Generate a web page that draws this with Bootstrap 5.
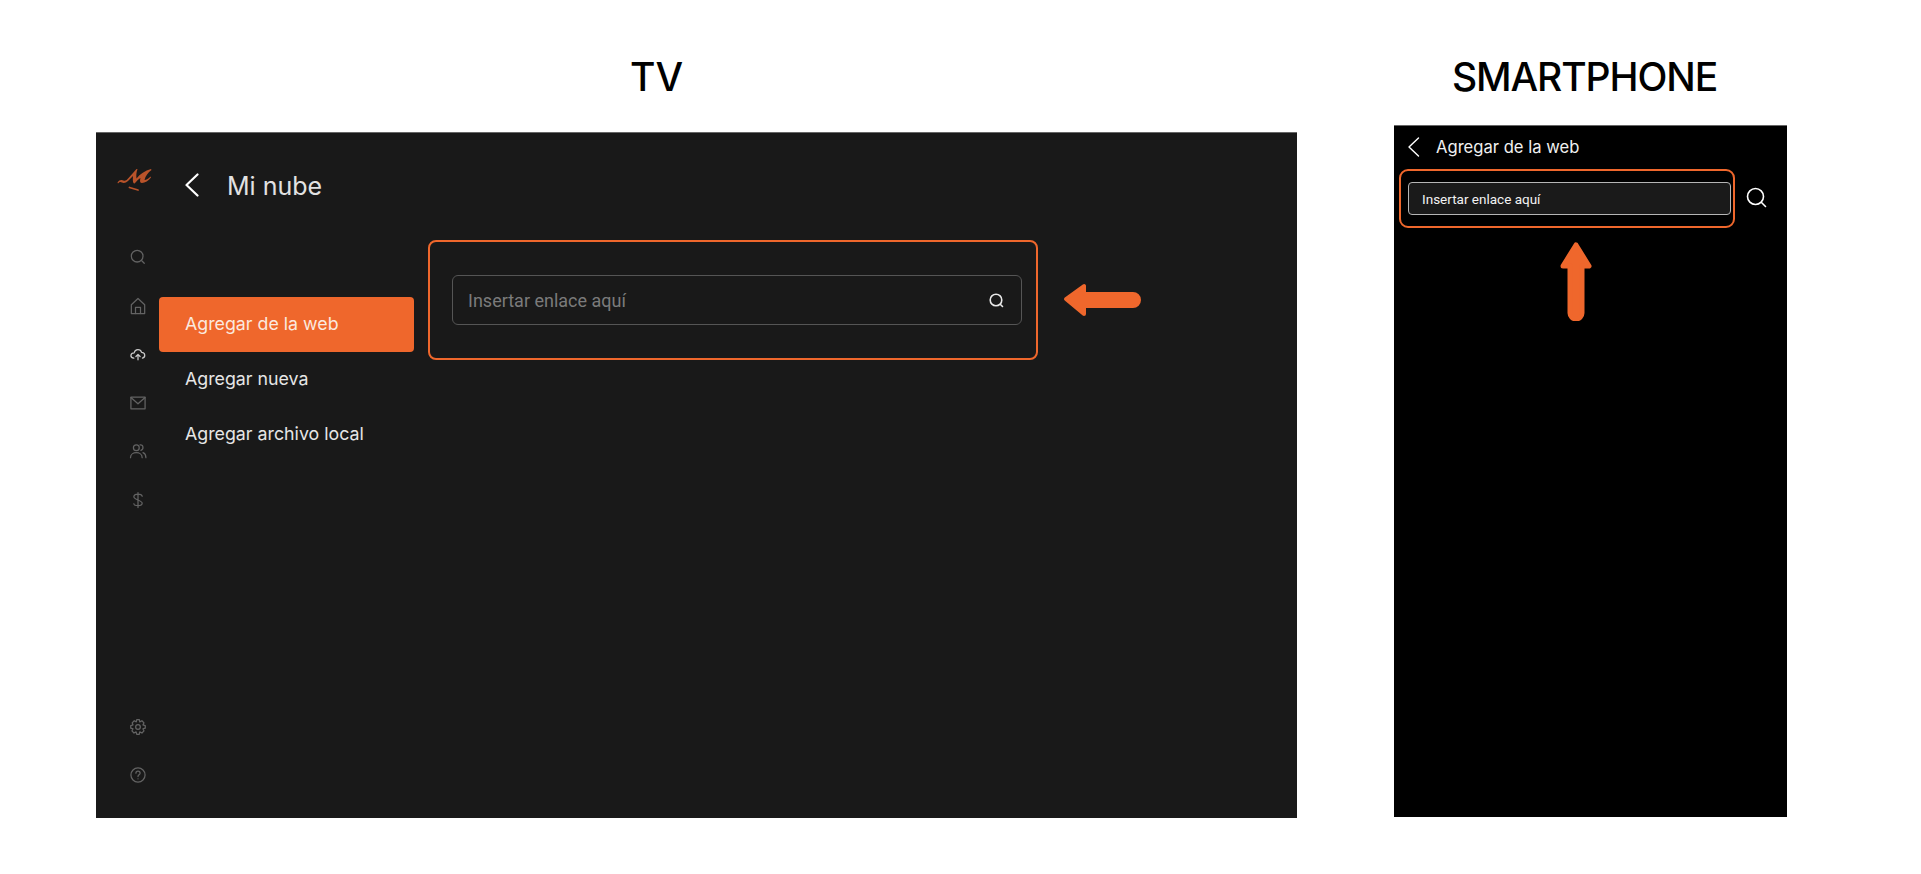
<!DOCTYPE html>
<html lang="es">
<head>
<meta charset="utf-8">
<title>Agregar de la web</title>
<link href="https://cdn.jsdelivr.net/npm/bootstrap@5.3.0/dist/css/bootstrap.min.css" rel="stylesheet">
<style>
html,body{height:874px;overflow:hidden;background:#fff}
body{font-family:Inter,"Liberation Sans",sans-serif;padding:51px 0 0 96px}
.cmp-col-tv{width:1201px;margin-right:97px}
.cmp-col-ph{width:393px}
.cmp-head{font-family:Inter,"Liberation Sans",sans-serif;font-weight:500;font-size:39px;line-height:52px;color:#000;text-align:center;margin:0}
.cmp-col-tv .cmp-head{padding-right:80px;margin-bottom:29px}
.cmp-col-ph .cmp-head{padding-right:12px;margin-bottom:22px;letter-spacing:-1.1px}
.tv-panel{height:686px;background:#191919;border-top:1px solid #666}
.tv-rail{width:63px;padding:35px 0 33px 21px}
.tv-logo{display:block;width:35px;height:24px;margin-bottom:55px}
.tv-rail-list{padding-left:11px;gap:28.5px}
.tv-rail-list svg{display:block;width:20px;height:20px;fill:none;stroke:#636363;stroke-width:1.5;stroke-linecap:round;stroke-linejoin:round}
.tv-rail-list svg.lit{stroke:#c9c9c9}
.tv-head{height:34px;margin:35px 0 38px 26px;gap:28px;color:#e2e2e2;font-size:25px}
.tv-head span{padding-top:4px}
.tv-back{width:14px;height:24px;fill:none;stroke:#fff;stroke-width:2.2;stroke-linecap:round;stroke-linejoin:round}
.tv-menu{width:255px;margin:57px 14px 0 0}
.tv-menu .nav-link{height:55px;padding:0 0 0 26px;display:flex;align-items:center;font-size:17.8px;color:#e6e6e6;border-radius:4px}
.tv-menu .nav-link.active{background:#ef672c;color:#fbe9df}
.mark-box{border:2px solid #ef672c;border-radius:8px}
.tv-mark{width:610px;height:120px;padding:0 14px 0 22px}
.tv-field{height:50px;border:1px solid #555;border-radius:6px;padding:0 16px;background:#191919}
.tv-field span{font-family:Roboto,sans-serif;font-size:18px;color:#7b7b7b;padding-top:1px;margin-left:-1px}
.tv-field svg{width:17px;height:17px;fill:none;stroke:#e8e8e8;stroke-width:1.6;stroke-linecap:round}
.tv-arrow{width:78px;height:34px;margin-left:25px}
.ph-panel{height:692px;background:#000;border-top:1px solid #666;padding:11px 0 0 5px}
.ph-head{height:20px;margin-left:9px;gap:16px;color:#f0f0f0;font-size:16.6px}
.ph-back{width:12px;height:20px;fill:none;stroke:#fff;stroke-width:1.4;stroke-linecap:round;stroke-linejoin:round}
.ph-row{margin-top:12px}
.ph-mark{width:336px;height:59px;padding:0 2px 0 7px;border-radius:9px}
.ph-field{height:33px;border:1.5px solid #b5b5b5;border-radius:4px;background:#1a1a1a;padding:1px 0 0 13px;font-family:Roboto,sans-serif;font-size:13.5px;color:#f2f2f2}
.ph-search{width:21px;height:21px;margin:0 0 3px 11px;fill:none;stroke:#fff;stroke-width:1.6;stroke-linecap:round}
.ph-arrow{display:block;width:34px;height:80px;margin:13px 0 0 160px}
</style>
</head>
<body>
<div class="d-flex align-items-start">
  <section class="cmp-col-tv">
    <h2 class="cmp-head">TV</h2>
    <div class="tv-panel d-flex">
      <aside class="tv-rail d-flex flex-column">
        <svg class="tv-logo" viewBox="0 0 35 24">
          <path fill="#b9532a" d="M.5 14.500C2 11.500 5 11.500 6.500 12.500 8 13.500 10 12 12 9.500L19.500 1h1C19.500 4 19 7 19.500 10.500 23 6 28 2.500 34 1l.5 1C31 4.500 28.500 8 27.500 12c2 0 4-1.500 6-3.500l.5 1C31.500 12.500 28 15 25 15c-2 0-2.500-2-1.500-5-2 1-4.500 4-6 5.500-1.500 0-2-2.500-1.500-7.500l-5 5c-2 2-4.500 2.500-6 1.500-1.500-1-3-.5-4 1z"/>
          <path d="M12.500 19.500l8.500 2.500" stroke="#b9532a" stroke-width="1.800" stroke-linecap="round"/>
        </svg>
        <div class="tv-rail-list d-flex flex-column">
          <svg viewBox="-2 -2 24 24"><circle cx="9" cy="9" r="7"/><path d="M14.500 14.500l3 3"/></svg>
          <svg viewBox="-2 -2 24 24"><path d="M2 8.500 10 1l8 7.500V19H2z"/><path d="M7 19v-7.500h6V19"/></svg>
          <svg class="lit" viewBox="-2 -2 24 24"><path d="M5 15c-5-.5-4.500-6.500.5-6.500C6.500 3.500 13 3.500 14.300 8c4.700.2 5 6 1 7"/><path d="M10 17V10.500M7.500 13l2.500-2.500 2.500 2.500"/></svg>
          <svg viewBox="-2 -2 24 24"><rect x="1.500" y="3" width="17" height="14"/><path d="M1.500 3.500 10 11l8.500-7.500"/></svg>
          <svg viewBox="-2 -2 24 24"><circle cx="8" cy="6" r="3.500"/><path d="M1 18c0-8 14-8 14 0"/><path d="M12.500 2.700c3.700-.7 5 5 1 6.500M16 12c2 .8 3.500 3 3.500 6"/></svg>
          <svg viewBox="-2 -2 24 24"><path d="M15 5.500c-.5-3.500-9.500-3.500-10 .5s10 4 10 8-9.500 3.500-10 .5M10 1v18"/></svg>
        </div>
        <div class="tv-rail-list d-flex flex-column mt-auto">
          <svg viewBox="-2 -2 24 24"><circle cx="10" cy="10" r="2.800"/><path d="M8.500 1h3l.6 2.800 2.600-1.300 2.500 2.500-1.300 2.500 2.800.9v3l-2.800.8 1.300 2.500-2.500 2.500-2.600-1.300-.6 2.800h-3l-.8-2.800-2.500 1.300-2.500-2.500 1.300-2.500-2.700-.8v-3l2.700-.9L3 5l2.500-2.500 2.500 1.300z"/></svg>
          <svg viewBox="-2 -2 24 24"><circle cx="10" cy="10" r="8.500"/><path d="M7.500 7.800c0-3.200 5-3.200 5 0 0 2-2.500 2-2.500 4M10 14.500v.1"/></svg>
        </div>
      </aside>
      <main class="flex-grow-1">
        <div class="tv-head d-flex align-items-center">
          <svg class="tv-back" viewBox="0 0 14 24"><path d="M12.500 1.500 1.500 12l11 10.500"/></svg>
          <span>Mi nube</span>
        </div>
        <div class="d-flex align-items-start">
          <nav class="tv-menu nav nav-pills flex-column">
            <a class="nav-link active" href="#">Agregar de la web</a>
            <a class="nav-link" href="#">Agregar nueva</a>
            <a class="nav-link" href="#">Agregar archivo local</a>
          </nav>
          <div class="d-flex align-items-center">
            <div class="tv-mark mark-box d-flex align-items-center">
              <div class="tv-field flex-grow-1 d-flex align-items-center justify-content-between">
                <span>Insertar enlace aquí</span>
                <svg viewBox="0 0 17 17"><circle cx="8" cy="8" r="5.800"/><path d="M12.500 12.500l2 2"/></svg>
              </div>
            </div>
            <svg class="tv-arrow" viewBox="0 0 78 34"><path d="M3 16 21 3v8h49a6 6 0 0 1 0 12H21v8z" fill="#ef672c" stroke="#ef672c" stroke-width="4" stroke-linejoin="round"/></svg>
          </div>
        </div>
      </main>
    </div>
  </section>
  <section class="cmp-col-ph">
    <h2 class="cmp-head">SMARTPHONE</h2>
    <div class="ph-panel">
      <div class="ph-head d-flex align-items-center">
        <svg class="ph-back" viewBox="0 0 12 20"><path d="M10.500 1 1 10l9.500 9"/></svg>
        <span>Agregar de la web</span>
      </div>
      <div class="ph-row d-flex align-items-center">
        <div class="ph-mark mark-box d-flex align-items-center">
          <div class="ph-field flex-grow-1 d-flex align-items-center">Insertar enlace aquí</div>
        </div>
        <svg class="ph-search" viewBox="0 0 21 21"><circle cx="9.500" cy="9.500" r="8"/><path d="M15.500 15.500l4 4"/></svg>
      </div>
      <svg class="ph-arrow" viewBox="0 0 34 80"><path d="M17 4 30 25h-7v47a5.500 5.500 0 0 1-12 0V25H4z" fill="#ef672c" stroke="#ef672c" stroke-width="5" stroke-linejoin="round"/></svg>
    </div>
  </section>
</div>
</body>
</html>
